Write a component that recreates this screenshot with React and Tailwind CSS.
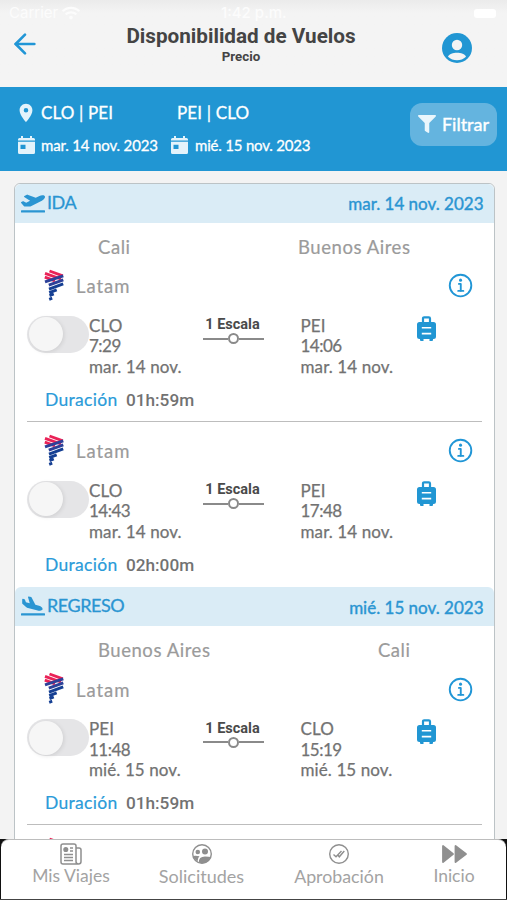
import React from "react";
import { MdLocationOn } from "react-icons/md";
import { FaFilter, FaPlaneDeparture, FaPlaneArrival, FaWifi } from "react-icons/fa";
import { IoInformationCircleOutline } from "react-icons/io5";
import { FiArrowLeft } from "react-icons/fi";

const IDA = [
  { from: "CLO", dep: "7:29", to: "PEI", arr: "14:06", date: "mar. 14 nov.", time: "01h:59m" },
  { from: "CLO", dep: "14:43", to: "PEI", arr: "17:48", date: "mar. 14 nov.", time: "02h:00m" },
];
const REGRESO = [
  { from: "PEI", dep: "11:48", to: "CLO", arr: "15:19", date: "mié. 15 nov.", time: "01h:59m" },
];

function LatamLogo() {
  return (
    <svg className="h-[32px] w-[20px] shrink-0" viewBox="0 0 20 32" fill="none" strokeWidth="2.9">
      <path d="M5.5 2L18.8 6.9M1 4.3L17 10M0.8 8.2L11 11.9" stroke="#ea2257" />
      <path d="M19.3 6.8L1 12.9M19.3 10.9L4.8 16.2" stroke="#2d4199" />
      <path d="M19.2 14.8L5 20.100M12.7 20.800L5.200 23.600M9.800 25L5.500 26.600M8.200 29.200L5.200 30.300" stroke="#153f93" />
    </svg>
  );
}

function CalendarIcon() {
  return (
    <svg className="h-[20px] w-[17px] shrink-0" viewBox="0 0 17 20" fill="#e3f3fb">
      <path d="M3 1H5V3H12V1H14V3H15.5Q17 3 17 4.500V5.500H0V4.500Q0 3 1.500 3H3Z" />
      <path fillRule="evenodd" d="M0 6.700H17V17.500Q17 19 15.500 19H1.500Q0 19 0 17.500ZM2.500 9.700V14H7.500V9.700Z" />
    </svg>
  );
}

function LuggageIcon() {
  return (
    <svg className="h-[25px] w-[19px]" viewBox="0 0 19 25" fill="#2196d3">
      <path d="M6 7V2.500Q6 1.300 7.200 1.300H11.800Q13 1.300 13 2.500V7" fill="none" stroke="#2196d3" strokeWidth="2.200" />
      <path fillRule="evenodd" d="M2.500 6H16.500Q19 6 19 8.500V20.500Q19 23 16.500 23H2.500Q0 23 0 20.500V8.500Q0 6 2.500 6ZM4.800 11V12.600H14.200V11ZM4.800 16.800V18.400H14.200V16.800Z" />
      <path d="M3 22H6.500V25H4Q3 25 3 24ZM12.500 22H16V24Q16 25 15 25H12.500Z" />
    </svg>
  );
}

function Toggle() {
  return (
    <div className="flex h-[37px] w-[61.5px] shrink-0 items-center rounded-full bg-[#e5e5e7] p-[1.5px]">
      <div className="size-[34px] rounded-full bg-[#f6f6f6] shadow-[1px_1px_4px_rgba(0,0,0,0.1)]" />
    </div>
  );
}

function Stop({ code, time, date, className }) {
  return (
    <div className={"whitespace-nowrap text-[17px] leading-[20.5px] text-[#727272] [-webkit-text-stroke:0.25px] " + className}>
      <div className="tracking-[0.1px]">{code}</div>
      <div className="tracking-[-0.5px]">{time}</div>
      <div className="tracking-[0.1px]">{date}</div>
    </div>
  );
}

function Flight({ f, last }) {
  return (
    <div className="px-3">
      <div className={"flex h-[165px] flex-col pt-[10px] " + (last ? "" : "border-b border-[#bdbdbd]")}>
        <div className="flex h-[36px] items-center pl-[17px] pr-[6px]">
          <LatamLogo />
          <span className="ml-3 mt-[5px] text-[18.5px] tracking-[0.95px] text-[#9b9b9b] [-webkit-text-stroke:0.2px]">Latam</span>
          <IoInformationCircleOutline className="ml-auto mt-[3px] size-[30px] text-[#2196d6]" />
        </div>
        <div className="mt-[13px] flex items-start">
          <Toggle />
          <Stop code={f.from} time={f.dep} date={f.date} className="w-[114.5px] pl-[0.5px]" />
          <div className="mt-[0.5px] flex w-[61px] flex-col items-center font-[Roboto] text-[14.5px] font-bold leading-[17px] text-[#4a4a4a]">
            <span className="-ml-[2px] whitespace-nowrap">1 Escala</span>
            <div className="flex w-full items-center">
              <div className="h-[2px] flex-1 bg-[#8a8a8a]" />
              <div className="size-[11px] rounded-full border-2 border-[#8a8a8a]" />
              <div className="h-[2px] flex-1 bg-[#8a8a8a]" />
            </div>
          </div>
          <Stop code={f.to} time={f.arr} date={f.date} className="ml-[36.5px] w-[116px]" />
          <LuggageIcon />
        </div>
        <div className="mt-[11.5px] flex items-center pl-[18px] leading-[22px]">
          <span className="w-[81px] text-[17.5px] tracking-[0.3px] text-[#2a9bd9] [-webkit-text-stroke:0.2px]">Duración</span>
          <span className="font-[Roboto] text-[17.2px] font-medium text-[#727272]">{f.time}</span>
        </div>
      </div>
    </div>
  );
}

function Section({ icon: Icon, title, date, from, to, flights, more, bandClass }) {
  return (
    <section>
      <div className={"flex items-center justify-between rounded-t-md bg-[#daecf6] pl-[6px] pr-[10px] text-[#2a95d2] [-webkit-text-stroke:0.3px] " + bandClass}>
        <div className="-mt-px flex items-center">
          <Icon className="size-[24px]" />
          <span className="ml-[2px] text-[18px] tracking-[-0.45px]">{title}</span>
        </div>
        <span className="mt-[2px] text-[17px] [-webkit-text-stroke:0.4px]">{date}</span>
      </div>
      <div className="flex h-[34px] items-end justify-between pl-[83px] pr-[83px] text-[18.5px] leading-[19px] tracking-[0.55px] text-[#9b9b9b] [-webkit-text-stroke:0.2px]">
        <span>{from}</span>
        <span>{to}</span>
      </div>
      {flights.map((f, i) => (
        <Flight key={i} f={f} last={!more && i === flights.length - 1} />
      ))}
      {more && (
        <div className="pl-[29px] pt-[12px]">
          <LatamLogo />
        </div>
      )}
    </section>
  );
}

function NewsIcon() {
  return (
    <svg className="size-[22px]" viewBox="0 0 22 22" fill="none" stroke="currentColor" strokeWidth="1.500">
      <path d="M16 18.500V3Q16 1 14 1H3Q1 1 1 3V19Q1 21 3 21H18.500Q21 21 21 18.500V7Q21 5 19 5H16M16 18.500Q16 21 18.500 21" />
      <circle cx="5.800" cy="6.500" r="1.800" fill="currentColor" />
      <path d="M10 5H13M10 8H13M4 11.500H13M4 14.500H13M4 17.500H13" />
    </svg>
  );
}

function PeopleIcon() {
  return (
    <svg className="size-[22px]" viewBox="0 0 22 22" fill="currentColor">
      <circle cx="11" cy="11" r="9.300" fill="none" stroke="currentColor" strokeWidth="1.400" />
      <circle cx="6.800" cy="9" r="2.300" />
      <circle cx="14" cy="8.500" r="3" />
      <path d="M2 13Q5 12.300 8.500 13.300Q6.500 15 6.500 18.500Q3 16.500 2 13Z" />
      <path d="M7.800 19.500Q7.500 13.500 14 13.500Q18 13.500 19.800 14Q17 20.500 11 20.300Q9 20.300 7.800 19.500Z" />
    </svg>
  );
}

function ApproveIcon() {
  return (
    <svg className="size-[22px]" viewBox="0 0 22 22" fill="none" stroke="currentColor" strokeWidth="1.400">
      <circle cx="11" cy="11" r="9.300" />
      <path d="M5.500 11.500L8 13.800L13.500 8M9.800 12L11.300 13.800L16.300 8" />
    </svg>
  );
}

function ForwardIcon() {
  return (
    <svg className="h-[22px] w-[27px]" viewBox="0 0 27 22" fill="currentColor" stroke="currentColor" strokeWidth="1.800" strokeLinejoin="round">
      <path d="M2 3V19L12 11ZM14.500 3V19L25 11Z" />
    </svg>
  );
}

function Tab({ children, label, className }) {
  return (
    <div className={"flex flex-col items-center whitespace-nowrap leading-[22px] text-[#a3a3a3] " + className}>
      <div className="flex h-[22px] items-center text-[#8f8f8f]">{children}</div>
      <span>{label}</span>
    </div>
  );
}

export default function App() {
  return (
    <div className="flex h-[900px] w-[507px] flex-col overflow-hidden bg-[#f3f3f3] font-[Lato,sans-serif]">
      <header className="relative h-[86.5px] shrink-0 bg-linear-to-b from-[#ebebeb] via-[#f4f4f4] via-15% to-[#f4f4f4]">
        <div className="flex h-[26px] items-center px-[9px] font-[Inter] text-[15px] text-[#fcfcfc]">
          <span className="w-[53px]">Carrier</span>
          <FaWifi className="size-[18px]" />
          <span className="ml-[141px] font-medium">1:42 p.m.</span>
          <div className="ml-auto mr-[2px] h-[9px] w-[22px] rounded-[3px] bg-white" />
        </div>
        <div className="absolute inset-x-0 top-[24px] flex flex-col items-center pr-[25px] font-[Roboto] font-bold text-[#444]">
          <h1 className="text-[20.7px] leading-[24px]">Disponibilidad de Vuelos</h1>
          <p className="text-[13.3px] leading-[17px]">Precio</p>
        </div>
        <FiArrowLeft className="absolute left-[9px] top-[28px] size-[32px] text-[#2196d6]" />
        <svg className="absolute left-[442px] top-[33px] size-[30px]" viewBox="0 0 30 30">
          <circle cx="15" cy="15" r="15" fill="#2196d3" />
          <circle cx="15" cy="12" r="5.200" fill="#f4f4f4" />
          <path d="M6 23.800C8 18.500 22 18.500 24 23.800C19 28.500 11 28.500 6 23.800Z" fill="#f4f4f4" />
        </svg>
      </header>

      <div className="flex h-[84px] shrink-0 items-start bg-[#2196d3] pl-[15px] pr-[10px] text-white">
        <div className="w-[153px] pt-[14px] [-webkit-text-stroke:0.3px]">
          <div className="flex h-[24px] items-center">
            <MdLocationOn className="size-[22px] text-[#e3f3fb]" />
            <span className="ml-[4px] text-[17px] tracking-[0.15px]">CLO | PEI</span>
          </div>
          <div className="mt-[8px] flex h-[24px] items-center pl-[3px]">
            <CalendarIcon />
            <span className="ml-[6px] mt-[2px] whitespace-nowrap text-[15px] tracking-[-0.15px] [-webkit-text-stroke:0.3px]">mar. 14 nov. 2023</span>
          </div>
        </div>
        <div className="pt-[14px] [-webkit-text-stroke:0.3px]">
          <div className="flex h-[24px] items-center pl-[9px] text-[17px] tracking-[0.15px]">PEI | CLO</div>
          <div className="mt-[8px] flex h-[24px] items-center pl-[3px]">
            <CalendarIcon />
            <span className="ml-[7px] mt-[2px] whitespace-nowrap text-[15px] tracking-[-0.2px] [-webkit-text-stroke:0.3px]">mié. 15 nov. 2023</span>
          </div>
        </div>
        <button className="ml-auto mt-[16px] flex h-[43px] w-[87px] items-center justify-center gap-[6px] rounded-xl bg-[#64b4df] text-[18px] [-webkit-text-stroke:0.4px]">
          <FaFilter className="size-[18px] text-[#eaf6fc]" />
          Filtrar
        </button>
      </div>

      <div className="min-h-0 flex-1 overflow-hidden pl-[14px] pr-[12.5px] pt-[12px]">
        <main className="rounded-t-md border border-[#bcc3c6] bg-white">
          <Section icon={FaPlaneDeparture} title="IDA" date="mar. 14 nov. 2023" from="Cali" to="Buenos Aires" flights={IDA} bandClass="h-[39px]" />
          <Section icon={FaPlaneArrival} title="REGRESO" date="mié. 15 nov. 2023" from="Buenos Aires" to="Cali" flights={REGRESO} more bandClass="h-[39.5px]" />
        </main>
      </div>

      <div className="h-[61px] shrink-0 bg-[linear-gradient(90deg,#111_0_10px,#f3f3f3_10px_497px,#111_497px)]">
        <nav className="mx-px flex h-[60px] items-start rounded-t-lg border-t border-[#bdbdbd] bg-white pt-[3px]">
          <Tab label="Mis Viajes" className="w-[140px] text-[17.5px]"><NewsIcon /></Tab>
          <Tab label="Solicitudes" className="w-[121px] text-[18px]"><PeopleIcon /></Tab>
          <Tab label="Aprobación" className="w-[154px] text-[17.8px]"><ApproveIcon /></Tab>
          <Tab label="Inicio" className="w-[76px] text-[17.5px]"><ForwardIcon /></Tab>
        </nav>
        <div className="h-px bg-[#444]" />
      </div>
    </div>
  );
}
